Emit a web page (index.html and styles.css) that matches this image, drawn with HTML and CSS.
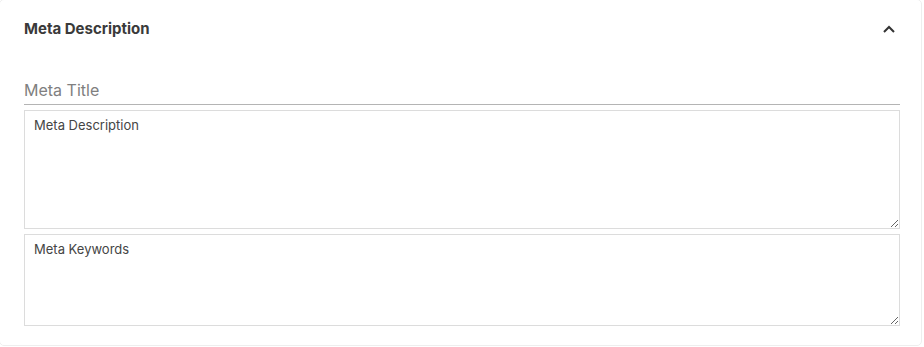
FILE: index.html
```html
<!DOCTYPE html>
<html>
<head>
<meta charset="utf-8">
<link rel="stylesheet" href="styles.css">
</head>
<body>
<div class="card">
  <div class="card-header">
    <span class="card-title">Meta Description</span>
    <svg class="chevron" width="12" height="8" viewBox="0 0 12 8"><path d="M1 7 L6 2 L11 7" fill="none" stroke="#333" stroke-width="2"/></svg>
  </div>
  <div class="card-body">
    <input class="title-input" type="text" placeholder="Meta Title">
    <textarea class="area area-desc" placeholder="Meta Description"></textarea>
    <textarea class="area area-keys" placeholder="Meta Keywords"></textarea>
  </div>
</div>
</body>
</html>
```
FILE: styles.css
```css
html, body {
  margin: 0;
  padding: 0;
  background: #fff;
  font-family: Inter, "Noto Sans", sans-serif;
}
.card {
  box-sizing: border-box;
  width: 923px;
  height: 347px;
  border: 1px solid #eeeeee;
  border-radius: 5px;
  margin-top: -1px;
  margin-left: -1px;
  background: #fff;
}
.card-header {
  display: flex;
  align-items: center;
  justify-content: space-between;
  height: 57px;
  padding: 0 26px 0 24px;
}
.card-title {
  font-size: 15px;
  font-weight: 700;
  color: #3a3a3a;
}
.chevron {
  display: block;
}
.card-body {
  display: flex;
  flex-direction: column;
  gap: 5px;
  padding: 16px 22px 0 24px;
}
.title-input {
  box-sizing: border-box;
  width: 876px;
  height: 32px;
  border: none;
  border-bottom: 1px solid #b4b4b4;
  padding: 2px 0 0 0;
  font-family: inherit;
  font-size: 16px;
  color: #333;
  outline: none;
  background: transparent;
}
.title-input::placeholder {
  color: #808080;
}
.area {
  box-sizing: border-box;
  width: 876px;
  border: 1px solid #dcdcdc;
  border-radius: 0;
  padding: 6px 9px;
  font-family: inherit;
  font-size: 13px;
  color: #333;
  resize: vertical;
  outline: none;
}
.area::placeholder {
  color: #454545;
}
.area-desc {
  height: 119px;
}
.area-keys {
  height: 92px;
}
```
